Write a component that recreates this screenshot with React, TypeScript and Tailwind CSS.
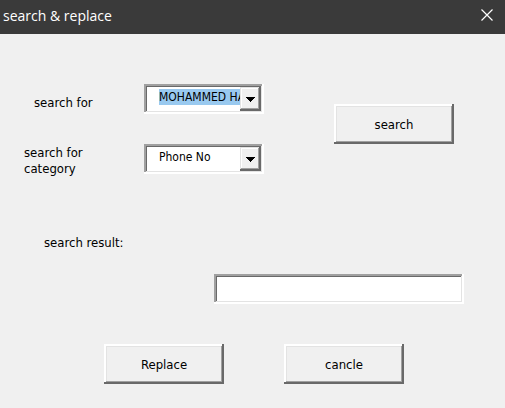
import type { ButtonHTMLAttributes } from 'react';

const SUNKEN =
  'bg-white shadow-[inset_-2px_-2px_#ffffff,inset_2px_2px_#a0a0a0,inset_-3px_-3px_#e3e3e3,inset_3px_3px_#696969]';

function RaisedButton({ children, ...rest }: ButtonHTMLAttributes<HTMLButtonElement>) {
  return (
    <button
      type="button"
      className="h-10 w-[120px] shrink-0 bg-[#f0f0f0] pt-0.5 text-center shadow-[inset_-2px_-2px_#696969,inset_2px_2px_#ffffff,inset_-3px_-3px_#a0a0a0,inset_3px_3px_#e3e3e3]"
      {...rest}
    >
      {children}
    </button>
  );
}

function ComboBox({ id, value, highlighted = false }: { id: string; value: string; highlighted?: boolean }) {
  return (
    <div className={`flex h-[30px] w-[120px] p-[3px] pl-[15px] text-xs ${SUNKEN}`}>
      <select
        id={id}
        defaultValue={value}
        className={`mt-0.5 h-4 w-0 flex-1 appearance-none overflow-hidden leading-4 outline-none ${
          highlighted ? 'bg-[#99c9ef]' : 'bg-white'
        }`}
      >
        <option value={value}>{value}</option>
      </select>
      <span
        aria-hidden="true"
        className="pointer-events-none flex w-[21px] items-center justify-center bg-[#f0f0f0] shadow-[inset_-2px_-2px_#696969,inset_1px_1px_#e3e3e3,inset_-3px_-3px_#a0a0a0,inset_2px_2px_#ffffff]"
      >
        <svg width="9" height="5" viewBox="0 0 9 5" shapeRendering="crispEdges">
          <path d="M0 0h9v1H8v1H7v1H6v1H5v1H4V4H3V3H2V2H1V1H0z" fill="#000" />
        </svg>
      </span>
    </div>
  );
}

export default function App() {
  return (
    <div className="min-h-screen bg-[#f0f0f0] font-['DejaVu_Sans_Condensed','DejaVu_Sans',sans-serif] text-[13px] leading-4 text-black">
      <header className="flex h-[34px] items-center justify-between bg-[#3a3a3a] pr-3 pb-0.5 pl-[3px] text-white">
        <h1 className="font-['Open_Sans','Noto_Sans',sans-serif] text-sm">search &amp; replace</h1>
        <button type="button" aria-label="Close" className="pb-0.5">
          <svg width="12" height="12" viewBox="0 0 12 12" fill="none" stroke="#fff" strokeWidth="1.2">
            <path d="M0.5 0.5l11 11M11.5 0.5l-11 11" />
          </svg>
        </button>
      </header>
      <main className="pt-[50px]">
        <div className="flex items-start gap-[70px] pl-6">
          <div className="grid grid-cols-[120px_120px] items-start gap-y-[30px]">
            <label htmlFor="term" className="pt-[11px] pl-2.5">
              search for
            </label>
            <ComboBox id="term" value="MOHAMMED HA" highlighted />
            <label htmlFor="category" className="-mb-3 w-20 pt-px">
              search for category
            </label>
            <ComboBox id="category" value="Phone No" />
          </div>
          <div className="pt-5">
            <RaisedButton>search</RaisedButton>
          </div>
        </div>
        <label htmlFor="result" className="mt-[60px] block pt-px pl-11">
          search result:
        </label>
        <div className="mt-[23px] pr-[41px] pl-[214px]">
          <input id="result" type="text" className={`block h-[30px] w-full px-2 outline-none ${SUNKEN}`} />
        </div>
        <div className="mt-10 flex gap-[60px] pl-[104px]">
          <RaisedButton>Replace</RaisedButton>
          <RaisedButton>cancle</RaisedButton>
        </div>
      </main>
    </div>
  );
}
